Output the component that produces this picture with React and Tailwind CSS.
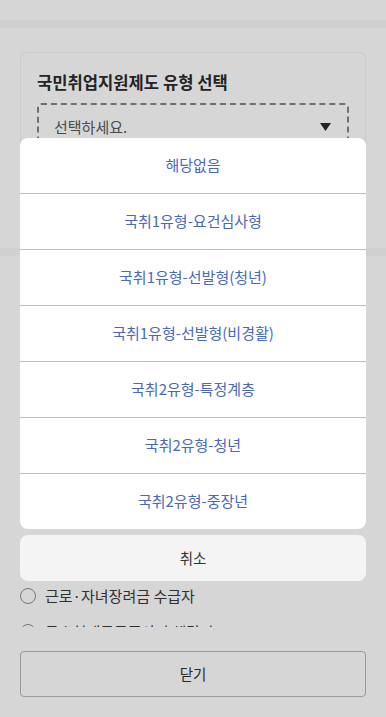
import { useState } from 'react';

const TYPES = [
  '해당없음',
  '국취1유형-요건심사형',
  '국취1유형-선발형(청년)',
  '국취1유형-선발형(비경활)',
  '국취2유형-특정계층',
  '국취2유형-청년',
  '국취2유형-중장년',
];

const GROUP_A = [
  '기초생활수급자',
  '차상위계층',
  '한부모가족',
  '북한이탈주민',
  '결혼이민자',
  '위기청소년',
];

const GROUP_B = ['노숙인 등 비주택 거주자', '근로·자녀장려금 수급자', '특수형태근로종사자 해당자'];

function Radio({ label }) {
  return (
    <label className="h-9 flex items-center gap-[9px]">
      <span className="w-4 h-4 rounded-full border-[1.5px] border-[#8e8e8e] bg-white shrink-0" />
      <span className="text-[15px] leading-5 text-[#3a3a3a]">{label}</span>
    </label>
  );
}

export default function App() {
  const [open, setOpen] = useState(true);

  return (
    <div className="relative h-[717px] w-full overflow-hidden bg-white font-['Noto_Sans_CJK_KR','Noto_Sans',sans-serif]">
      <div className="h-full flex flex-col">
        {/* ── 본문 ── */}
        <main className="flex-1 overflow-hidden">
          <div className="h-5" />
          <div className="h-2 bg-[#f8f8f8]" />

          {/* 유형 선택 카드 */}
          <section className="h-[220px] px-5 pt-6">
            <div className="border border-[#f2f2f2] rounded-md px-4 pt-[17px] pb-4">
              <h2 className="text-[16.6px] leading-6 font-bold text-[#2a2a2a]">국민취업지원제도 유형 선택</h2>
              <button className="mt-[9px] w-full h-12 border-2 border-dashed border-[#858585] rounded-sm flex items-center justify-between pl-[15px] pr-4">
                <span className="text-[15px] text-[#5a5a5a]">선택하세요.</span>
                <svg width="11" height="8" viewBox="0 0 11 8">
                  <path d="M0 0h11L5.5 8z" fill="#2a2a2a" />
                </svg>
              </button>
            </div>
          </section>

          <div className="h-2 bg-[#f8f8f8]" />

          {/* 해당 항목 */}
          <section className="px-5 pt-6">
            <h3 className="text-[16px] leading-6 font-bold text-[#2a2a2a]">해당 항목 선택</h3>
            <div className="mt-2 flex flex-col">
              {GROUP_A.map((g) => <Radio key={g} label={g} />)}
            </div>
            <div className="mt-[14px] flex flex-col">
              {GROUP_B.map((g) => <Radio key={g} label={g} />)}
            </div>
          </section>
        </main>

        {/* ── 하단 ── */}
        <footer className="shrink-0 bg-white px-5 pt-6 pb-5">
          <button className="w-full h-[46px] border border-[#b8b8b8] rounded text-[14.5px] text-[#333]">닫기</button>
        </footer>
      </div>

      {/* ── 선택 시트 ── */}
      {open && (
        <div className="absolute inset-0 bg-black/[0.16] flex items-center px-5">
          <div className="w-full flex flex-col gap-[6px] translate-y-[1px]">
            <ul className="bg-white rounded-lg overflow-hidden">
              {TYPES.map((t, i) => (
                <li
                  key={t}
                  className={
                    'h-[55px] flex items-center justify-center text-[15px] text-[#4a67c0] ' +
                    (i > 0 ? 'border-t border-[#bdbdbd] h-[56px]' : '')
                  }
                >
                  {t}
                </li>
              ))}
            </ul>
            <button
              onClick={() => setOpen(false)}
              className="h-[46px] bg-[#f4f4f4] rounded-lg text-[14.5px] text-[#333]"
            >
              취소
            </button>
          </div>
        </div>
      )}
    </div>
  );
}
